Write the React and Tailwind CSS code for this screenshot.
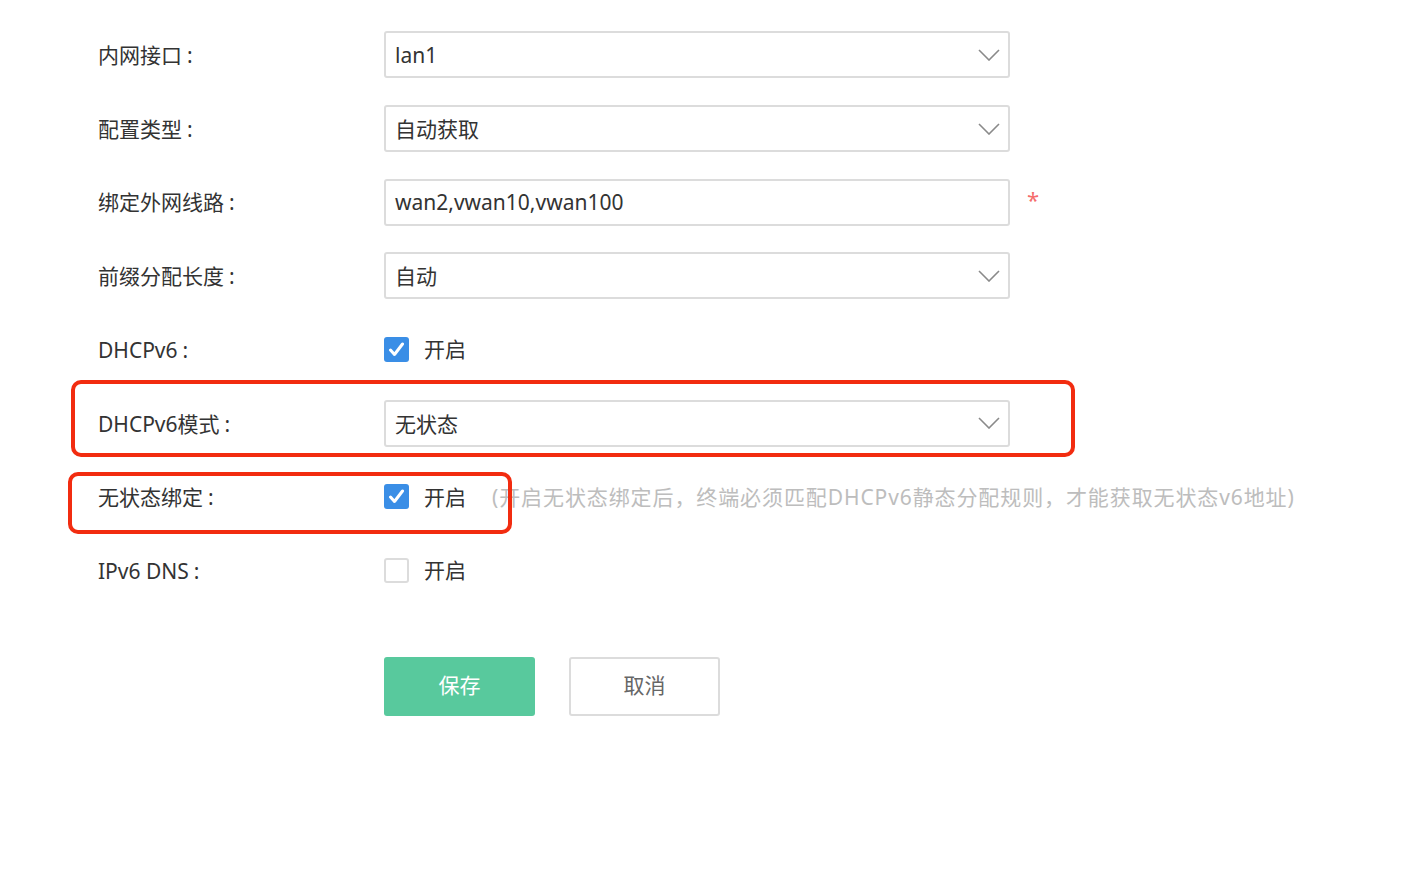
import React from 'react';

const font = { fontFamily: '"Noto Sans", "Noto Sans CJK SC", sans-serif' };

function Chevron() {
  return (
    <svg width="22" height="12" viewBox="0 0 22 12" className="absolute right-[8px] top-1/2 -translate-y-1/2">
      <path d="M1 1 L11 11 L21 1" fill="none" stroke="#8a8a8a" strokeWidth="1.6" />
    </svg>
  );
}

function Field({ value, select = true }) {
  return (
    <div className="relative w-[626px] h-[47px] border-2 border-[#dcdcdc] rounded-[3px] bg-white flex items-center px-[9px] pt-[2px] text-[21px] text-[#333]">
      {value}
      {select && <Chevron />}
    </div>
  );
}

function Check({ checked }) {
  return checked ? (
    <div className="w-[25px] h-[25px] rounded-[3px] bg-[#3a8ee6] flex items-center justify-center">
      <svg width="17" height="15" viewBox="0 0 17 15">
        <path d="M2.5 8 L6.5 12.5 L14.5 2" fill="none" stroke="#fff" strokeWidth="3" strokeLinecap="round" strokeLinejoin="round" />
      </svg>
    </div>
  ) : (
    <div className="w-[25px] h-[25px] rounded-[3px] border-2 border-[#dcdcdc] bg-white" />
  );
}

function Row({ label, children }) {
  return (
    <div className="h-[73.7px] flex items-center">
      <div className="w-[286px] text-[21px] text-[#333] pt-[2px]">
        {label}
        <span className="ml-[5px]">:</span>
      </div>
      {children}
    </div>
  );
}

function On() {
  return <span className="ml-[15px] text-[21px] text-[#333] pt-[1px]">开启</span>;
}

export default function App() {
  return (
    <div className="relative w-[1417px] h-[871px] bg-white" style={font}>
      <div className="pt-[18px] pl-[98px]">
        <Row label="内网接口"><Field value="lan1" /></Row>
        <Row label="配置类型"><Field value="自动获取" /></Row>
        <Row label="绑定外网线路">
          <Field value="wan2,vwan10,vwan100" select={false} />
          <span className="ml-[17px] mt-[-6px] text-[22px] text-[#f56c6c]">*</span>
        </Row>
        <Row label="前缀分配长度"><Field value="自动" /></Row>
        <Row label="DHCPv6">
          <Check checked />
          <On />
        </Row>
        <Row label="DHCPv6模式"><Field value="无状态" /></Row>
        <Row label="无状态绑定">
          <Check checked />
          <On />
          <span className="ml-[26px] pt-[1px] text-[21px] text-[#bdbdbd] tracking-[0.9px]">(开启无状态绑定后，终端必须匹配DHCPv6静态分配规则，才能获取无状态v6地址)</span>
        </Row>
        <Row label="IPv6 DNS">
          <Check />
          <On />
        </Row>
        <div className="mt-[49px] ml-[286px] flex gap-[34px]">
          <button className="w-[151px] h-[59px] rounded-[3px] bg-[#58c99d] text-white text-[21px]">保存</button>
          <button className="w-[151px] h-[59px] rounded-[3px] border-2 border-[#dcdcdc] bg-white text-[#666] text-[21px]">取消</button>
        </div>
      </div>

      {/* highlight boxes */}
      <div className="absolute left-[71px] top-[380px] w-[1004px] h-[77px] border-4 border-[#f22c10] rounded-[10px]" />
      <div className="absolute left-[68px] top-[472px] w-[444px] h-[62px] border-4 border-[#f22c10] rounded-[10px]" />
    </div>
  );
}
